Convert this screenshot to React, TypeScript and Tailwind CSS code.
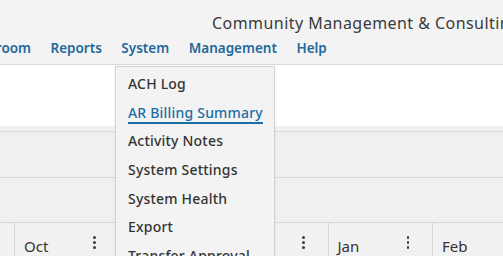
import React from 'react'

const menuItems = [
  { label: 'ACH Log', active: false },
  { label: 'AR Billing Summary', active: true },
  { label: 'Activity Notes', active: false },
  { label: 'System Settings', active: false },
  { label: 'System Health', active: false },
  { label: 'Export', active: false },
  { label: 'Transfer Approval', active: false },
]

const columns = ['Oct', 'Nov', 'Dec', 'Jan', 'Feb']

function Kebab() {
  return (
    <div className="flex flex-col gap-[2.5px]">
      <span className="block h-[2.5px] w-[2.5px] rounded-full bg-[#3d3d3d]" />
      <span className="block h-[2.5px] w-[2.5px] rounded-full bg-[#3d3d3d]" />
      <span className="block h-[2.5px] w-[2.5px] rounded-full bg-[#3d3d3d]" />
    </div>
  )
}

export default function App() {
  return (
    <div
      className="relative h-[256px] w-[503px] overflow-hidden bg-[#f1f1f1] text-[#333]"
      style={{ fontFamily: '"Noto Sans", "Open Sans", sans-serif' }}
    >
      {/* Header */}
      <header className="h-[65px] border-b border-[#d9d9d9] bg-[#f3f3f3]">
        <div className="flex h-[38px] items-end whitespace-nowrap pb-[3px] pl-[212px] text-[16px] tracking-[0.45px] text-[#3a3a3a]">
          Community Management &amp; Consulting
        </div>
        <nav className="flex items-center gap-[19.5px] whitespace-nowrap text-[13.5px] font-semibold text-[#23699a]">
          <span className="flex w-[31px] justify-end overflow-hidden">Boardroom</span>
          <span>Reports</span>
          <span>System</span>
          <span>Management</span>
          <span>Help</span>
        </nav>
      </header>

      {/* Page content */}
      <div className="h-[61px] bg-white" />
      <div className="h-[6px] border-b border-[#d6d6d6] bg-[#f1f1f1]" />
      <div className="h-[46px] border-b border-[#d6d6d6] bg-[#f0f0f0]" />
      <div className="h-[45px] border-b border-[#d6d6d6] bg-[#f0f0f0]" />

      {/* Table header */}
      <div className="flex h-[40px] bg-[#f1f1f1]">
        <div className="w-[14px] shrink-0" />
        {columns.map((c) => (
          <div
            key={c}
            className="flex w-[104.5px] shrink-0 items-start justify-between border-l border-[#d6d6d6] pl-[9px] pr-[23px] pt-[13px]"
          >
            <span className="text-[15px] leading-[20px]">{c}</span>
            <Kebab />
          </div>
        ))}
      </div>

      {/* Dropdown */}
      <div className="absolute left-[115px] top-[66px] w-[160px] border border-[#d2d2d2] bg-[#f3f3f3] pl-[12px] pt-[2px] shadow-[0_1px_3px_rgba(0,0,0,0.08)]">
        {menuItems.map((item) => (
          <div key={item.label} className="flex h-[28.7px] items-center">
            <span
              className={
                item.active
                  ? 'mt-[2px] inline-block border-b-2 border-[#1b6ea3] text-[14px] font-medium leading-[19px] tracking-[0.2px] text-[#1b6ea3]'
                  : 'inline-block text-[14px] font-medium leading-[19px] tracking-[0.2px] text-[#333]'
              }
            >
              {item.label}
            </span>
          </div>
        ))}
      </div>
    </div>
  )
}
